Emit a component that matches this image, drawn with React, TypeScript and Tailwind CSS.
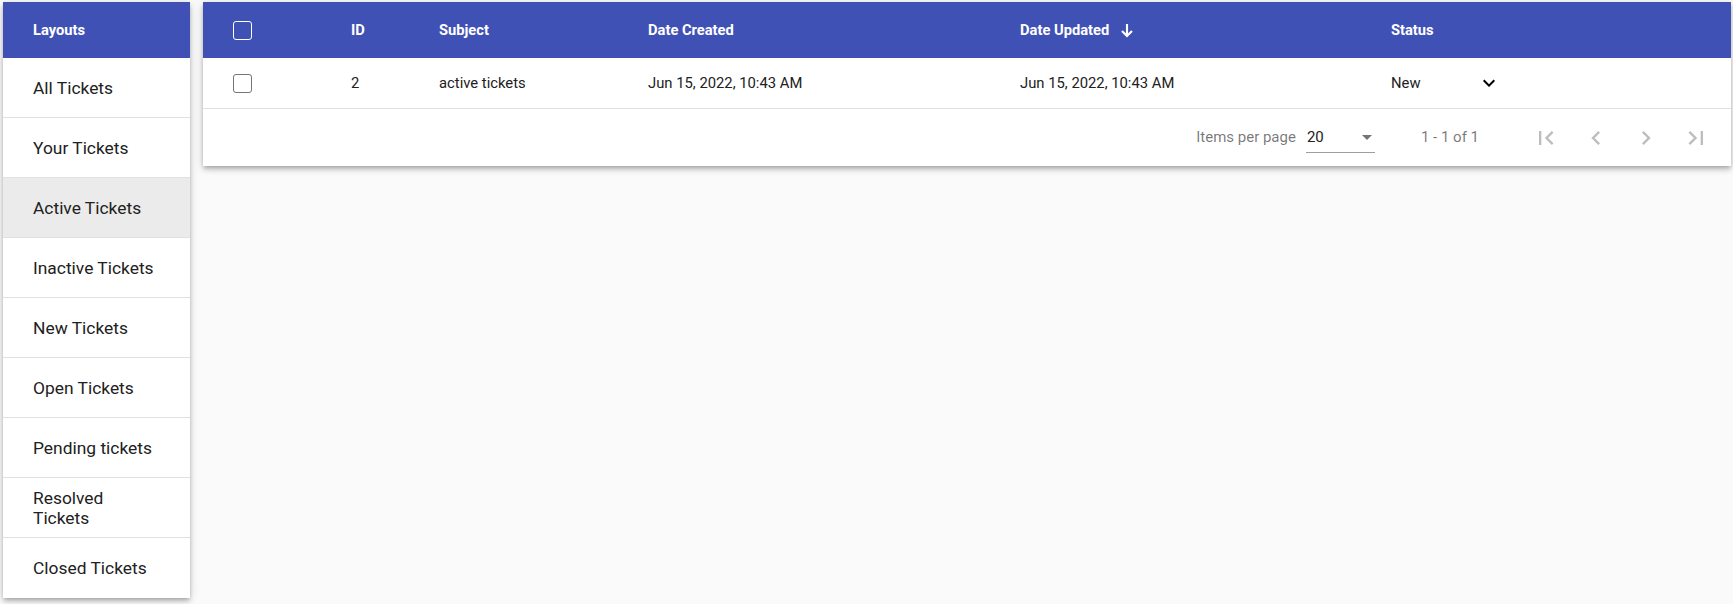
import { useState } from "react";

const layouts = [
  "All Tickets",
  "Your Tickets",
  "Active Tickets",
  "Inactive Tickets",
  "New Tickets",
  "Open Tickets",
  "Pending tickets",
  "Resolved Tickets",
  "Closed Tickets",
];

const tickets = [
  {
    id: 2,
    subject: "active tickets",
    created: "Jun 15, 2022, 10:43 AM",
    updated: "Jun 15, 2022, 10:43 AM",
    status: "New",
  },
];

const cols = "grid grid-cols-[118px_88px_209px_372px_371px_1fr] items-center pl-[30px]";

function Checkbox({ light }: { light?: boolean }) {
  return (
    <span
      className={`block w-[19px] h-[19px] rounded-[3px] border-[1.5px] ${
        light ? "border-white" : "border-[#757575]"
      }`}
    />
  );
}

function PagerIcon({ d }: { d: string }) {
  return (
    <button className="w-[50px] h-[40px] flex items-center justify-center text-[#bdbdbd] cursor-default">
      <svg viewBox="0 0 24 24" className="w-[28px] h-[28px]" fill="currentColor">
        <path d={d} />
      </svg>
    </button>
  );
}

export default function App() {
  const [active, setActive] = useState("Active Tickets");

  return (
    <div className="min-h-screen bg-[#fafafa] pl-[3px] pr-[2px] pt-[2px] flex items-start gap-[13px] font-['Roboto',sans-serif] text-[#212121]">
      {/* Layouts sidebar */}
      <div className="w-[187px] shrink-0 bg-white shadow-[0_2px_4px_-1px_rgba(0,0,0,0.2),0_4px_5px_0_rgba(0,0,0,0.14),0_1px_10px_0_rgba(0,0,0,0.12)]">
        <div className="h-[56px] bg-[#3f51b5] flex items-center pl-[30px] text-white text-[14.7px] font-bold">
          Layouts
        </div>
        {layouts.map((name) => (
          <button
            key={name}
            onClick={() => setActive(name)}
            className={`w-full h-[60px] flex items-center text-left pl-[30px] pr-[31px] text-[17.4px] leading-[20px] border-b border-[#e0e0e0] last:border-b-0 ${
              active === name ? "bg-[#ebebeb]" : "bg-white"
            }`}
          >
            {name}
          </button>
        ))}
      </div>

      {/* Tickets table */}
      <div className="flex-1 bg-white shadow-[0_2px_4px_-1px_rgba(0,0,0,0.2),0_4px_5px_0_rgba(0,0,0,0.14),0_1px_10px_0_rgba(0,0,0,0.12)]">
        <div className={`${cols} h-[56px] bg-[#3f51b5] text-white text-[14.7px] font-bold`}>
          <Checkbox light />
          <span>ID</span>
          <span>Subject</span>
          <span>Date Created</span>
          <span className="flex items-center">
            Date Updated
            <svg
              viewBox="0 0 24 24"
              className="w-[16px] h-[16px] ml-[10px]"
              fill="none"
              stroke="currentColor"
              strokeWidth={3.2}
            >
              <path d="M12 3v18M4.5 13.5L12 21l7.5-7.5" />
            </svg>
          </span>
          <span>Status</span>
        </div>

        {tickets.map((t) => (
          <div key={t.id} className={`${cols} h-[51px] border-b border-[#e0e0e0] text-[14.8px]`}>
            <Checkbox />
            <span>{t.id}</span>
            <span>{t.subject}</span>
            <span>{t.created}</span>
            <span>{t.updated}</span>
            <span className="flex items-center">
              <span className="w-[86px]">{t.status}</span>
              <svg viewBox="0 0 24 24" className="w-6 h-6 text-black" fill="currentColor">
                <path d="M16.59 8.59L12 13.17 7.41 8.59 6 10l6 6 6-6z" />
              </svg>
            </span>
          </div>
        ))}

        {/* Paginator */}
        <div className="h-[57px] flex items-center justify-end pr-[10px] text-[15px] text-[rgba(0,0,0,0.54)]">
          <span>Items per page</span>
          <div className="ml-[10px] w-[69px] h-[30px] border-b border-[#9e9e9e] flex items-center justify-between pl-[1px] pr-[3px]">
            <span className="text-[#212121]">20</span>
            <span className="w-0 h-0 border-l-[5px] border-r-[5px] border-t-[5px] border-l-transparent border-r-transparent border-t-[#757575]" />
          </div>
          <span className="ml-[46px] mr-[42px]">1 - 1 of 1</span>
          <PagerIcon d="M18.41 16.59L13.82 12l4.59-4.59L17 6l-6 6 6 6zM6 6h2v12H6z" />
          <PagerIcon d="M15.41 7.41L14 6l-6 6 6 6 1.41-1.41L10.83 12z" />
          <PagerIcon d="M10 6L8.59 7.41 13.17 12l-4.58 4.59L10 18l6-6z" />
          <PagerIcon d="M5.59 7.41L10.18 12l-4.59 4.59L7 18l6-6-6-6zM16 6h2v12h-2z" />
        </div>
      </div>
    </div>
  );
}
